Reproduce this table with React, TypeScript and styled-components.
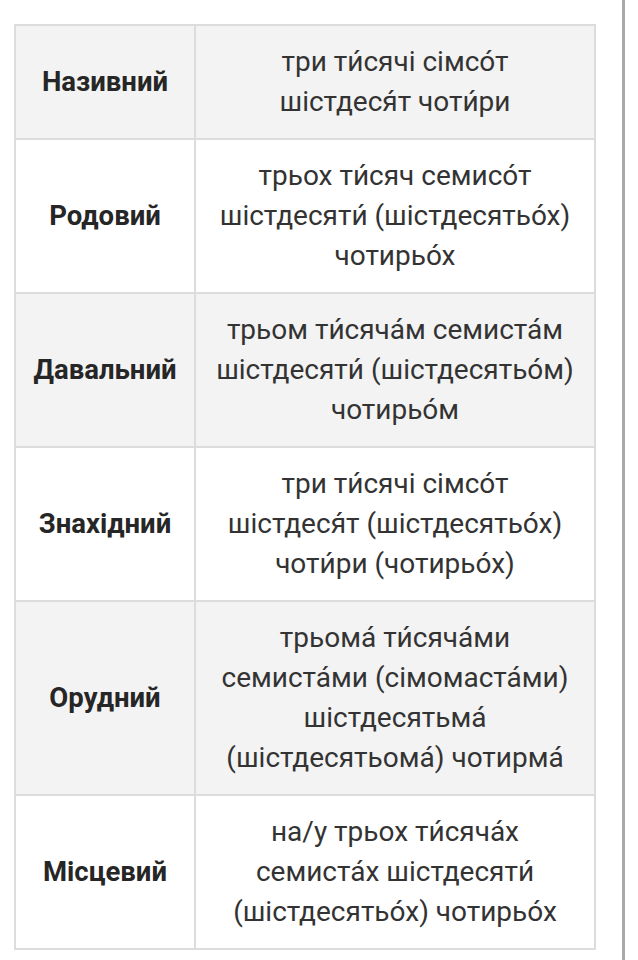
import React from "react";
import styled, { createGlobalStyle } from "styled-components";

const Global = createGlobalStyle`
  html, body { margin: 0; padding: 0; background: #ffffff; }
  body { font-family: Roboto, "Noto Sans", sans-serif; }
`;

const Page = styled.div`
  width: 625px;
  min-height: 960px;
  box-sizing: border-box;
  border-right: 3px solid #a9a9a9;
  padding: 24px 0 0 14px;
  background: #ffffff;
`;

const Table = styled.table`
  border-collapse: collapse;
  table-layout: fixed;
  width: 582px;
  border: 2px solid #dcdcdc;
`;

const Row = styled.tr<{ $striped: boolean }>`
  background: ${(p) => (p.$striped ? "#f3f3f3" : "#ffffff")};
`;

const Head = styled.th`
  width: 170px;
  border: 2px solid #dcdcdc;
  padding: 16px 4px;
  font-family: Roboto, "Liberation Sans", sans-serif;
  font-weight: 700;
  font-size: 27.5px;
  line-height: 40px;
  color: #262626;
  text-align: center;
  vertical-align: middle;
`;

const Cell = styled.td`
  border: 2px solid #dcdcdc;
  padding: 16px 4px;
  font-family: Roboto, "Noto Sans", sans-serif;
  font-weight: 400;
  font-size: 28px;
  line-height: 40px;
  color: #333333;
  text-align: center;
  vertical-align: middle;
`;

const Line = styled.span`
  display: block;
  white-space: nowrap;
`;

const A = "\u0301";

const rows: { name: string; lines: string[] }[] = [
  { name: "Називний", lines: [`три ти${A}сячі сімсо${A}т`, `шістдеся${A}т чоти${A}ри`] },
  {
    name: "Родовий",
    lines: [`трьох ти${A}сяч семисо${A}т`, `шістдесяти${A} (шістдесятьо${A}х)`, `чотирьо${A}х`],
  },
  {
    name: "Давальний",
    lines: [`трьом ти${A}сяча${A}м семиста${A}м`, `шістдесяти${A} (шістдесятьо${A}м)`, `чотирьо${A}м`],
  },
  {
    name: "Знахідний",
    lines: [`три ти${A}сячі сімсо${A}т`, `шістдеся${A}т (шістдесятьо${A}х)`, `чоти${A}ри (чотирьо${A}х)`],
  },
  {
    name: "Орудний",
    lines: [
      `трьома${A} ти${A}сяча${A}ми`,
      `семиста${A}ми (сімомаста${A}ми)`,
      `шістдесятьма${A}`,
      `(шістдесятьома${A}) чотирма${A}`,
    ],
  },
  {
    name: "Місцевий",
    lines: [`на/у трьох ти${A}сяча${A}х`, `семиста${A}х шістдесяти${A}`, `(шістдесятьо${A}х) чотирьо${A}х`],
  },
];

export default function App() {
  return (
    <>
      <Global />
      <Page>
        <Table>
          <tbody>
            {rows.map((r, i) => (
              <Row key={r.name} $striped={i % 2 === 0}>
                <Head scope="row">{r.name}</Head>
                <Cell>
                  {r.lines.map((l) => (
                    <Line key={l}>{l}</Line>
                  ))}
                </Cell>
              </Row>
            ))}
          </tbody>
        </Table>
      </Page>
    </>
  );
}
